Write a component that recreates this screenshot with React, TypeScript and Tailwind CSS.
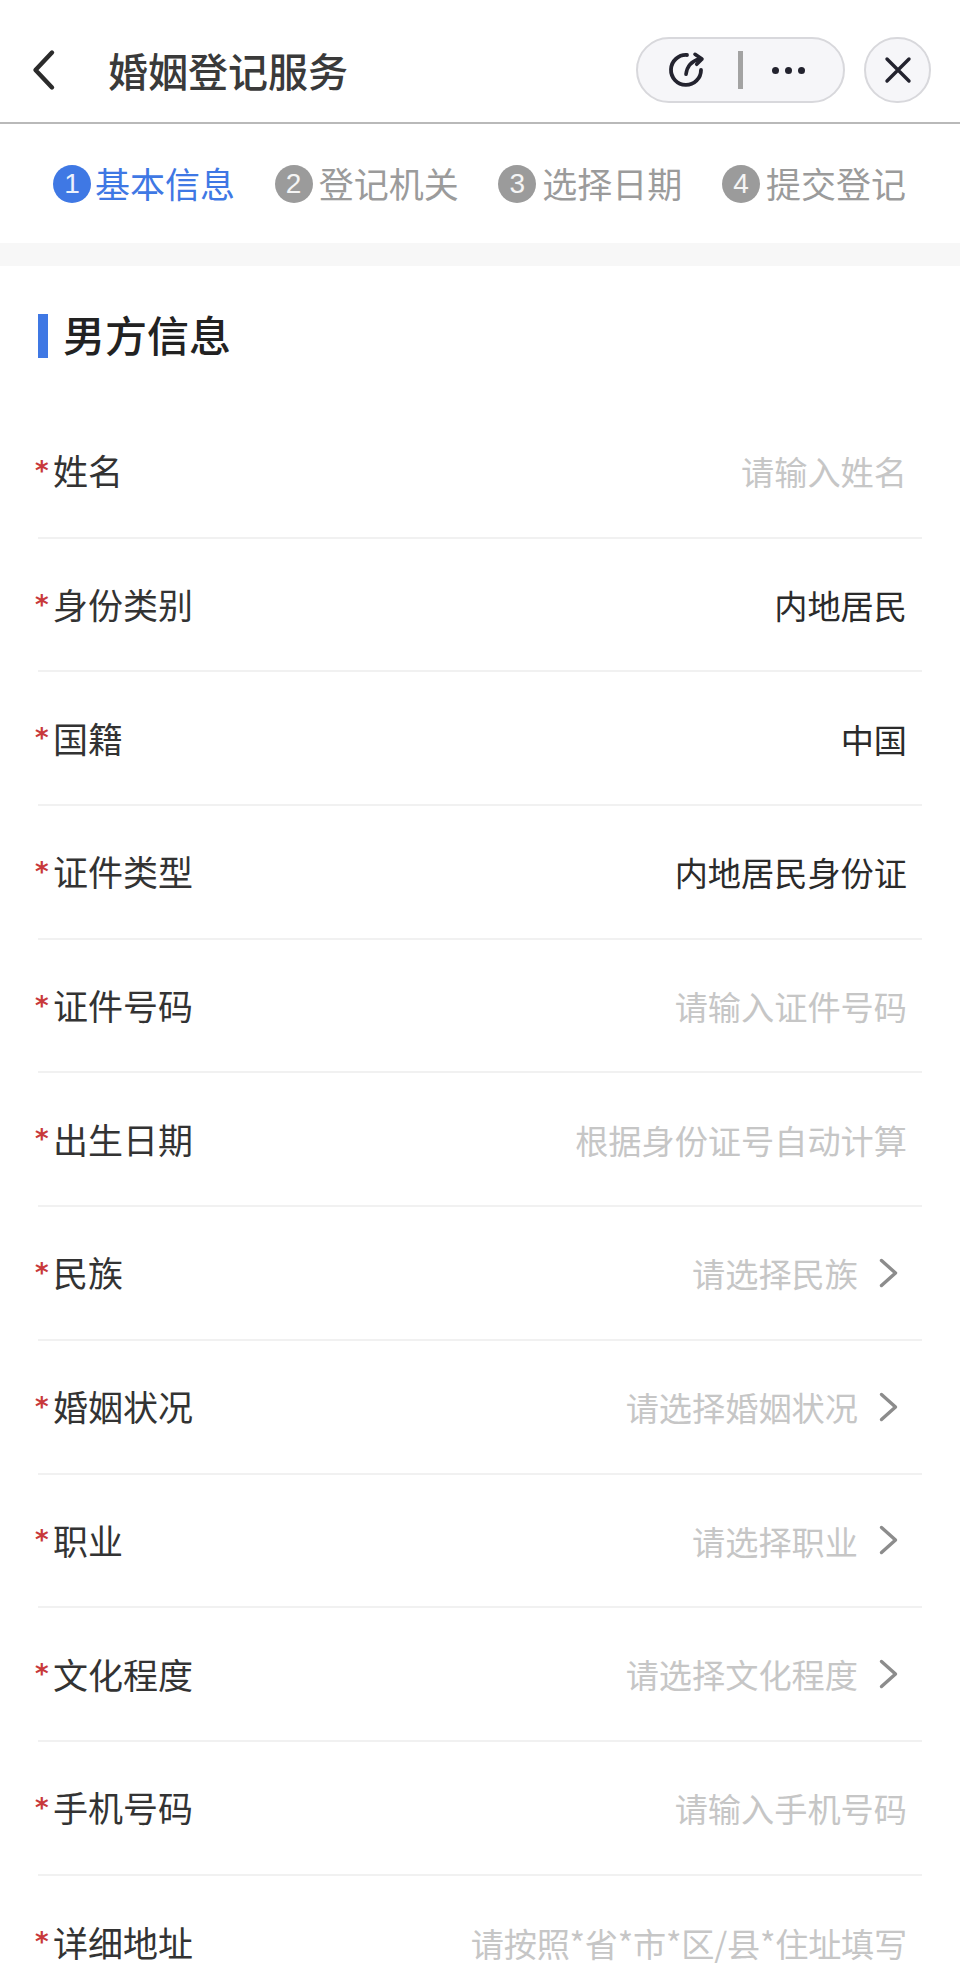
const cjk = "font-['Noto_Sans_CJK_SC','Noto_Sans',sans-serif]";

type Row = { label: string; value: string; filled?: boolean; arrow?: boolean; tight?: boolean };

const rows: Row[] = [
  { label: "姓名", value: "请输入姓名" },
  { label: "身份类别", value: "内地居民", filled: true },
  { label: "国籍", value: "中国", filled: true },
  { label: "证件类型", value: "内地居民身份证", filled: true },
  { label: "证件号码", value: "请输入证件号码" },
  { label: "出生日期", value: "根据身份证号自动计算" },
  { label: "民族", value: "请选择民族", arrow: true },
  { label: "婚姻状况", value: "请选择婚姻状况", arrow: true },
  { label: "职业", value: "请选择职业", arrow: true },
  { label: "文化程度", value: "请选择文化程度", arrow: true },
  { label: "手机号码", value: "请输入手机号码" },
  { label: "详细地址", value: "请按照*省*市*区/县*住址填写", tight: true },
];

const steps = [
  { n: "1", label: "基本信息", active: true },
  { n: "2", label: "登记机关" },
  { n: "3", label: "选择日期" },
  { n: "4", label: "提交登记" },
];

function Step({ n, label, active }: { n: string; label: string; active?: boolean }) {
  return (
    <div className={`flex items-center ${active ? "gap-[4px] text-[#3f78e4]" : "gap-[6px] text-[#9b9b9b]"}`}>
      <span
        className={`flex h-[38px] w-[38px] items-center justify-center rounded-full text-[28px] font-['Liberation_Sans',sans-serif] font-normal leading-none text-white/90 ${
          active ? "bg-[#3f78e4]" : "bg-[#9b9b9b]"
        }`}
      >
        {n}
      </span>
      <span className="mt-[-2px] text-[35px] leading-none">{label}</span>
    </div>
  );
}

function FormRow({ label, value, filled, arrow, tight }: Row) {
  return (
    <div className="flex h-[133.7px] shrink-0 items-center justify-between border-b-2 border-[#f1f1f1] last:border-b-0">
      <div className="ml-[-3px] flex items-center">
        <span className="w-[18px] text-[26px] font-bold leading-none text-[#c8393b] font-['DejaVu_Sans',sans-serif]">*</span>
        <span className="mt-[-2px] text-[35px] leading-none text-[#333333]">{label}</span>
      </div>
      <div className="flex items-center">
        <span
          className={`text-[33.2px] leading-none ${filled ? "text-[#2b2b2b]" : "text-[#c6c6c6]"} ${
            tight ? "tracking-[-0.24px]" : ""
          }`}
        >
          {value}
        </span>
        {arrow ? (
          <svg className="ml-[20px] mr-[24px]" width="20" height="30" viewBox="0 0 20 30" fill="none">
            <path d="M3.5 2.5 L17.5 15 L3.5 27.5" stroke="#8c8c8c" strokeWidth="3.4" strokeLinecap="round" strokeLinejoin="round" />
          </svg>
        ) : (
          <span className="w-[15px]" />
        )}
      </div>
    </div>
  );
}

export default function App() {
  return (
    <div className={`flex h-[1977px] w-[960px] flex-col overflow-hidden bg-white ${cjk}`}>
      <header className="flex h-[124px] shrink-0 items-center border-b-2 border-[#b9b9b9] pl-[30px] pr-[29px] pt-[18px]">
        <svg width="28" height="44" viewBox="0 0 28 44" fill="none" className="shrink-0">
          <path d="M22 4.5 L5.5 22 L22 39.5" stroke="#2b2b2b" strokeWidth="4.4" strokeLinecap="round" strokeLinejoin="round" />
        </svg>
        <h1 className="ml-[50px] text-[40px] font-medium leading-none text-[#3a3a3a]">婚姻登记服务</h1>
        <div className="ml-auto flex h-[66px] w-[209px] items-center rounded-full border-2 border-[#d8d8dc] bg-[#f6f6f9]">
          <svg width="44" height="44" viewBox="0 0 44 44" fill="none" className="ml-[26px] shrink-0">
            <path d="M23 7 A15 15 0 1 0 37 22" stroke="#23232f" strokeWidth="3.8" strokeLinecap="round" />
            <path d="M22 26.3 C23 18 28 13 35.3 11" stroke="#23232f" strokeWidth="3.6" strokeLinecap="round" />
            <path d="M31 6.3 L38 11 L32.7 16.3" stroke="#23232f" strokeWidth="3.6" strokeLinecap="round" strokeLinejoin="round" />
          </svg>
          <span className="ml-[30px] h-[38px] w-[5px] bg-[#a3a3a3]" />
          <div className="ml-[29px] flex items-center gap-[6px]">
            <span className="h-[7px] w-[7px] rounded-full bg-[#23232f]" />
            <span className="h-[7px] w-[7px] rounded-full bg-[#23232f]" />
            <span className="h-[7px] w-[7px] rounded-full bg-[#23232f]" />
          </div>
        </div>
        <button className="ml-[19px] flex h-[66px] w-[67px] shrink-0 items-center justify-center rounded-full border-2 border-[#d8d8dc] bg-[#f6f6f9]">
          <svg width="30" height="30" viewBox="0 0 30 30" fill="none">
            <path d="M4 4 L26 26 M26 4 L4 26" stroke="#23232f" strokeWidth="3.4" strokeLinecap="round" />
          </svg>
        </button>
      </header>

      <nav className="flex h-[119px] shrink-0 items-center justify-between pl-[53px] pr-[54px]">
        {steps.map((s) => (
          <Step key={s.n} {...s} />
        ))}
      </nav>

      <div className="h-[23px] shrink-0 bg-[#f7f7f7]" />

      <main className="flex min-h-0 flex-1 flex-col px-[38px]">
        <div className="mt-[48px] mb-[47px] flex h-[44px] shrink-0 items-center">
          <span className="h-[44px] w-[10px] bg-[#3f78e4]" />
          <h2 className="ml-[15px] mt-[-4px] text-[42px] font-medium leading-none text-[#222222]">男方信息</h2>
        </div>
        {rows.map((r) => (
          <FormRow key={r.label} {...r} />
        ))}
      </main>
    </div>
  );
}
